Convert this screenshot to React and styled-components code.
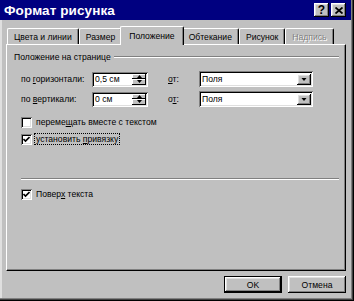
import React from 'react';
import styled, { createGlobalStyle, css } from 'styled-components';

const GlobalStyle = createGlobalStyle`
  html, body {
    margin: 0;
    padding: 0;
    background: #c0c0c0;
  }
  body {
    font-family: "Liberation Sans", Arial, sans-serif;
    font-size: 8.6px;
    color: #000;
  }
`;

const raised = css`
  box-shadow: inset -1px -1px #000, inset 1px 1px #fff, inset -2px -2px #808080, inset 2px 2px #dfdfdf;
`;

const sunken = css`
  box-shadow: inset 1px 1px #808080, inset -1px -1px #fff, inset 2px 2px #000, inset -2px -2px #dfdfdf;
`;

const Window = styled.div`
  box-sizing: border-box;
  width: 354px;
  height: 301px;
  background: #c0c0c0;
  display: flex;
  flex-direction: column;
  box-shadow: inset -1px -1px #000, inset -2px -2px #404040, inset -3px -3px #808080, inset 2px 0 #dfdfdf;
`;

const TitleBar = styled.div`
  height: 20px;
  background: #000080;
  display: flex;
  align-items: center;
  padding: 0 5px 0 4px;
  margin-right: 3px;
`;

const Title = styled.span`
  flex: 1;
  color: #fff;
  font-weight: bold;
  font-size: 13.5px;
  letter-spacing: 0.1px;
`;

const CaptionButton = styled.button`
  box-sizing: border-box;
  width: 15px;
  height: 14px;
  padding: 0;
  border: none;
  background: #c0c0c0;
  ${raised};
  display: flex;
  align-items: center;
  justify-content: center;
  font-family: "Liberation Sans", Arial, sans-serif;
  font-weight: bold;
  font-size: 12px;
  line-height: 1;
  color: #000;
  margin-left: ${p => p.$gap || 0}px;
`;

const Body = styled.div`
  flex: 1;
  padding: 6px 8px 0 6px;
  display: flex;
  flex-direction: column;
`;

const Tabs = styled.div`
  display: flex;
  align-items: flex-end;
  height: 18px;
  padding-left: 1px;
  position: relative;
  z-index: 1;
`;

const Tab = styled.div`
  box-sizing: border-box;
  height: ${p => (p.$active ? 19 : 16)}px;
  padding: 0 ${p => (p.$active ? 8 : 6)}px;
  margin: 0 ${p => (p.$active ? -2 : 0)}px ${p => (p.$active ? -1 : 0)}px;
  display: flex;
  align-items: center;
  background: #c0c0c0;
  border-top: 1px solid #fff;
  border-left: 1px solid #fff;
  border-right: 1px solid #000;
  border-radius: 2px 2px 0 0;
  box-shadow: inset -1px 0 #808080;
  white-space: nowrap;
  position: relative;
  z-index: ${p => (p.$active ? 2 : 1)};
  color: ${p => (p.$disabled ? '#808080' : '#000')};
  text-shadow: ${p => (p.$disabled ? '1px 1px #fff' : 'none')};
`;

const Panel = styled.div`
  box-sizing: border-box;
  height: 227px;
  border-top: 1px solid #fff;
  border-left: 1px solid #fff;
  border-right: 1px solid #000;
  border-bottom: 1px solid #000;
  box-shadow: inset -1px -1px #808080;
  padding: 6px 6px 0 6px;
  display: flex;
  flex-direction: column;
`;

const GroupHead = styled.div`
  display: flex;
  align-items: center;
  gap: 3px;
  height: 12px;
  padding-left: 1px;
`;

const Etched = styled.div`
  flex: 1;
  height: 0;
  border-top: 1px solid #808080;
  border-bottom: 1px solid #fff;
`;

const Fields = styled.div`
  display: grid;
  grid-template-columns: 71px 56px 20px 31px 114px;
  grid-auto-rows: 16px;
  row-gap: 4px;
  align-items: center;
  padding: 8px 0 0 8px;
`;

const Label = styled.span`
  white-space: nowrap;
`;

const Spacer = styled.span``;

const TextBox = styled.div`
  box-sizing: border-box;
  height: ${p => p.$h || 15}px;
  background: #fff;
  ${sunken};
  display: flex;
  align-items: center;
  padding: 0 2px 0 3px;
`;

const BoxText = styled.span`
  flex: 1;
  white-space: nowrap;
`;

const Spin = styled.div`
  display: flex;
  flex-direction: column;
  width: 14px;
  height: 11px;
`;

const SpinButton = styled.div`
  flex: 1;
  background: #c0c0c0;
  box-shadow: inset -1px -1px #000, inset 1px 1px #fff;
  display: flex;
  align-items: center;
  justify-content: center;
`;

const DropButton = styled.div`
  width: 14px;
  height: 11px;
  background: #c0c0c0;
  ${raised};
  display: flex;
  align-items: center;
  justify-content: center;
`;

const Checks = styled.div`
  display: flex;
  flex-direction: column;
  gap: 5px;
  padding: ${p => p.$top}px 0 0 8px;
`;

const CheckRow = styled.label`
  display: flex;
  align-items: center;
  gap: 3px;
  height: 12px;
`;

const CheckBox = styled.span`
  box-sizing: border-box;
  width: 11px;
  height: 11px;
  background: #fff;
  ${sunken};
  display: flex;
  align-items: center;
  justify-content: center;
`;

const CheckText = styled.span`
  white-space: nowrap;
  padding: 0 1px;
  outline: ${p => (p.$focus ? '1px dotted #000' : 'none')};
`;

const Separator = styled(Etched)`
  flex: none;
  margin: 33px 0 0 8px;
`;

const Footer = styled.div`
  display: flex;
  justify-content: flex-end;
  gap: 6px;
  padding-top: 5px;
`;

const PushButton = styled.button`
  box-sizing: border-box;
  width: 58px;
  height: 17px;
  padding: 0;
  border: ${p => (p.$default ? '1px solid #000' : 'none')};
  background: #c0c0c0;
  ${raised};
  font-family: "Liberation Sans", Arial, sans-serif;
  font-size: 8.6px;
  color: #000;
`;

const UpArrow = () => (
  <svg width="5" height="3" viewBox="0 0 5 3"><path d="M2.5 0L5 3H0z" fill="#000" /></svg>
);

const DownArrow = ({ w = 5, h = 3 }) => (
  <svg width={w} height={h} viewBox="0 0 5 3"><path d="M0 0H5L2.5 3z" fill="#000" /></svg>
);

const Tick = () => (
  <svg width="7" height="7" viewBox="0 0 7 7">
    <path d="M0.5 3 L2.5 5 L6.5 1" stroke="#000" strokeWidth="1.6" fill="none" />
  </svg>
);

const Spinner = ({ value }) => (
  <TextBox>
    <BoxText>{value}</BoxText>
    <Spin>
      <SpinButton><UpArrow /></SpinButton>
      <SpinButton><DownArrow /></SpinButton>
    </Spin>
  </TextBox>
);

const Combo = ({ value }) => (
  <TextBox $h={16}>
    <BoxText>{value}</BoxText>
    <DropButton><DownArrow w={6} h={3} /></DropButton>
  </TextBox>
);

const Check = ({ checked, focus, children }) => (
  <CheckRow>
    <CheckBox>{checked && <Tick />}</CheckBox>
    <CheckText $focus={focus}>{children}</CheckText>
  </CheckRow>
);

const tabs = ['Цвета и линии', 'Размер', 'Положение', 'Обтекание', 'Рисунок', 'Надпись'];

export default function App() {
  return (
    <>
      <GlobalStyle />
      <Window>
        <TitleBar>
          <Title>Формат рисунка</Title>
          <CaptionButton>?</CaptionButton>
          <CaptionButton $gap={2}>
            <svg width="8" height="7" viewBox="0 0 8 7">
              <path d="M0.5 0.5L7.5 6.5M7.5 0.5L0.5 6.5" stroke="#000" strokeWidth="1.8" />
            </svg>
          </CaptionButton>
        </TitleBar>
        <Body>
          <Tabs>
            {tabs.map((t, i) => (
              <Tab key={t} $active={i === 2} $disabled={i === 5}>{t}</Tab>
            ))}
          </Tabs>
          <Panel>
            <GroupHead>
              <Label>Положение на странице</Label>
              <Etched />
            </GroupHead>
            <Fields>
              <Label>по <u>г</u>оризонтали:</Label>
              <Spinner value="0,5 см" />
              <Spacer />
              <Label><u>о</u>т:</Label>
              <Combo value="Поля" />
              <Label>по <u>в</u>ертикали:</Label>
              <Spinner value="0 см" />
              <Spacer />
              <Label>о<u>т</u>:</Label>
              <Combo value="Поля" />
            </Fields>
            <Checks $top={9}>
              <Check>переме<u>щ</u>ать вместе с текстом</Check>
              <Check checked focus>установить <u>п</u>ривязку</Check>
            </Checks>
            <Separator />
            <Checks $top={8}>
              <Check checked>Повер<u>х</u> текста</Check>
            </Checks>
          </Panel>
          <Footer>
            <PushButton $default>OK</PushButton>
            <PushButton>Отмена</PushButton>
          </Footer>
        </Body>
      </Window>
    </>
  );
}
